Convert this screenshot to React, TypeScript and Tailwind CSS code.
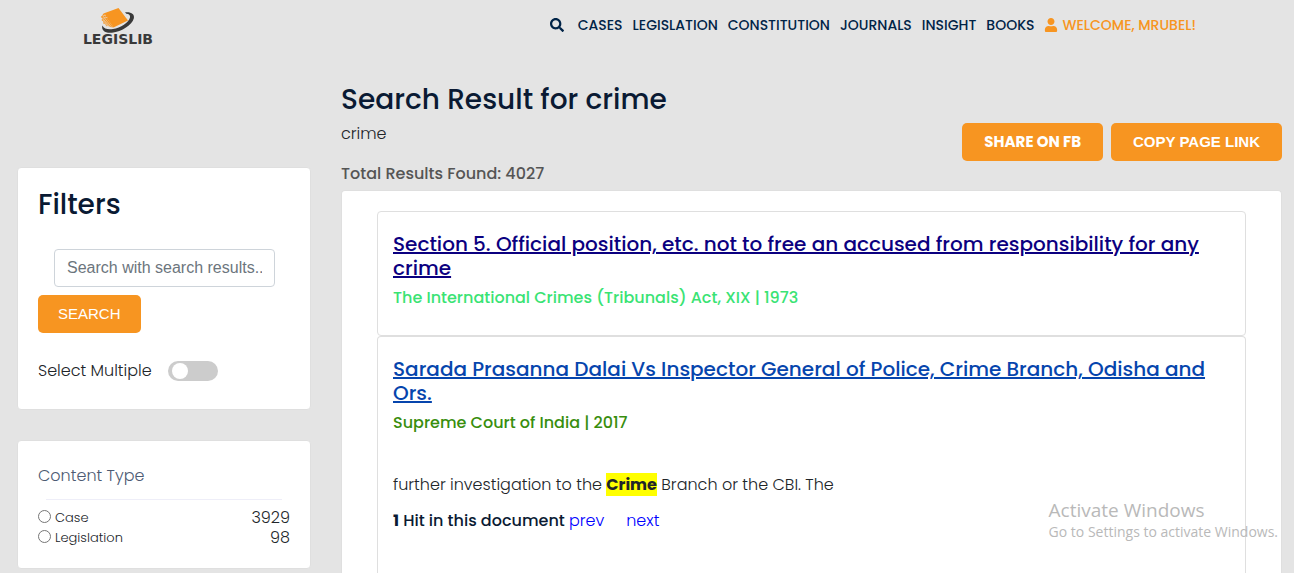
import { FaSearch, FaUser } from "react-icons/fa";

const navItems = ["CASES", "LEGISLATION", "CONSTITUTION", "JOURNALS", "INSIGHT", "BOOKS"];

const contentTypes = [
  { id: "case", label: "Case", count: 3929 },
  { id: "legislation", label: "Legislation", count: 98 },
];

const buttonClass = "h-[38px] rounded-[5px] bg-[#f79521] text-[15px] text-white";

function Logo() {
  return (
    <a href="#home" className="flex w-[84px] flex-col items-center">
      <svg viewBox="0 0 36 26" className="h-[26px] w-9" aria-hidden="true">
        <path
          fill="#393939"
          d="M25 4.300C31 3.600 35 6 33.800 10.500 32 17 22 23.500 12 24.700 5 25.400 1.300 22.500 2.300 17.500c1.700 3.500 5.700 4.300 10.700 3.600C20.500 20 29 14.500 30 9.600c.5-2.300-1-3.800-3.700-3.800Z"
        />
        <path fill="#f79521" d="M3.500 5.500 18.500 0 28 12.500l-14.500 7Z" />
        <path
          fill="#f79521"
          d="M3.500 5.500 13.500 19.500 10 19l-1-.2-1-.8-1.500.2L5 16l-1.800-.5.3-1.700L1.500 12l.9-1.500L.8 9l1.200-1.300Z"
        />
        <path
          stroke="#e4e4e4"
          strokeWidth=".5"
          fill="none"
          d="m2.500 7.500 9 11.500M2 9.500l8 9.500M2.500 11.500 9 19M4 14.500l4 4M3 7.700l3-.5M3.500 10l4-.7"
        />
      </svg>
      <span className="mt-px font-['DejaVu_Sans',sans-serif] text-[14px] leading-[9px] font-bold text-[#393939]">
        LEGISLIB
      </span>
    </a>
  );
}

function Header() {
  return (
    <header className="flex h-[67px] shrink-0 items-start justify-between pr-[98px] pl-[76px]">
      <div className="pt-2">
        <Logo />
      </div>
      <nav className="flex items-center gap-[10px] pt-[15px] text-[14px] leading-5 font-medium text-[#002347]">
        <button type="button" aria-label="Search" className="mr-1">
          <FaSearch className="size-[14px]" />
        </button>
        {navItems.map((item) => (
          <a key={item} href={`#${item.toLowerCase()}`}>
            {item}
          </a>
        ))}
        <a href="#account" className="flex items-center gap-1 text-[#f79521]">
          <FaUser className="size-[14px]" />
          WELCOME, MRUBEL!
        </a>
      </nav>
    </header>
  );
}

function Sidebar() {
  return (
    <aside className="flex w-[294px] shrink-0 flex-col gap-[30px] pt-[100px]">
      <section className="rounded-[4px] border border-[#dfdfdf] bg-white px-5 pt-5 pb-[26px]">
        <h2 className="text-[28px] leading-[34px] font-medium text-[#0a1a33]">Filters</h2>
        <form className="pt-[27px]" onSubmit={(e) => e.preventDefault()}>
          <div className="pr-[15px] pl-4">
            <input
              type="text"
              aria-label="Search with search results"
              placeholder="Search with search results.."
              className="block h-[38px] w-full rounded-[4px] border border-[#ced4da] bg-white px-3 font-['Liberation_Sans',sans-serif] text-[16px] placeholder:text-[#6c757d]"
            />
          </div>
          <button
            type="submit"
            className={`${buttonClass} mt-2 px-5 font-['Liberation_Sans',sans-serif]`}
          >
            SEARCH
          </button>
          <label className="mt-[26px] flex h-6 items-center gap-4 text-[16px] font-light text-[#212529]">
            Select Multiple
            <input
              type="checkbox"
              role="switch"
              className="h-5 w-[50px] appearance-none rounded-full bg-[#ccc] p-[2px] pl-1 before:block before:size-4 before:rounded-full before:bg-white checked:bg-[#f79521] checked:before:ml-7"
            />
          </label>
        </form>
      </section>

      <section className="rounded-[4px] border border-[#dfdfdf] bg-white px-5 pt-[23px] pb-5">
        <h3 className="text-[16px] leading-6 font-light text-[#4d5b73]">Content Type</h3>
        <hr className="mx-2 mt-[11px] mb-2 border-[#eeeef8]" />
        {contentTypes.map((type) => (
          <div key={type.id} className="flex h-5 items-center leading-5 font-light text-[#212529]">
            <input
              id={type.id}
              type="radio"
              name="content-type"
              className="mr-1 mb-[3px] size-[13px] appearance-none rounded-full border border-[#767676] bg-white checked:border-4"
            />
            <label htmlFor={type.id} className="grow text-[13px]">
              {type.label}
            </label>
            <span className="text-[16px]">{type.count}</span>
          </div>
        ))}
      </section>
    </aside>
  );
}

function Results() {
  return (
    <main className="flex min-w-0 grow flex-col pt-4">
      <h1 className="text-[28px] leading-[34px] font-medium text-[#0a1a33]">
        Search Result for crime
      </h1>
      <div className="flex justify-between">
        <div className="pt-[5px] text-[16px] leading-6">
          <p className="font-light text-[#212529]">crime</p>
          <p className="mt-4 font-medium text-[#555]">Total Results Found: 4027</p>
        </div>
        <div className="flex gap-2 pt-[6px] font-bold">
          <button type="button" className={`${buttonClass} px-[22px]`}>
            SHARE ON FB
          </button>
          <button
            type="button"
            className={`${buttonClass} px-[22px] font-['Liberation_Sans',sans-serif]`}
          >
            COPY PAGE LINK
          </button>
        </div>
      </div>

      <div className="mt-1 flex grow flex-col rounded-t-[4px] border border-b-0 border-[#dfdfdf] bg-white px-[35px] pt-5">
        <article className="rounded-[4px] border border-[#dfdfdf] px-[15px] pt-5 pb-[25px]">
          <h2 className="text-[20px] leading-6 font-medium text-[#0b0080]">
            <a href="#section-5" className="underline">
              Section 5. Official position, etc. not to free an accused from responsibility for any
              crime
            </a>
          </h2>
          <p className="mt-[6px] text-[16px] leading-6 font-medium text-[#3ae374]">
            The International Crimes (Tribunals) Act, XIX | 1973
          </p>
        </article>
        <article className="grow rounded-t-[4px] border border-b-0 border-[#dfdfdf] px-[15px] pt-5 pb-5">
          <h2 className="text-[20px] leading-6 font-medium text-[#0645ad]">
            <a href="#sarada-prasanna-dalai" className="underline">
              Sarada Prasanna Dalai Vs Inspector General of Police, Crime Branch, Odisha and Ors.
            </a>
          </h2>
          <p className="mt-[6px] text-[16px] leading-6 font-medium text-[#388e0e]">
            Supreme Court of India | 2017
          </p>
          <p className="mt-[38px] text-[16px] leading-6 font-light text-[#212529]">
            further investigation to the{" "}
            <mark className="bg-[#ff0] font-bold text-[#212529]">Crime</mark> Branch or the CBI. The
          </p>
          <p className="mt-3 text-[16px] leading-6 font-medium text-[#0a1a33]">
            <b>1</b> Hit in this document{" "}
            <a href="#prev" className="font-light text-[#00f]">
              prev
            </a>
            <a href="#next" className="ml-[22px] font-light text-[#00f]">
              next
            </a>
          </p>
        </article>
      </div>
    </main>
  );
}

export default function App() {
  return (
    <div className="relative flex min-h-screen flex-col bg-[#e4e4e4] font-['Poppins','Inter',sans-serif]">
      <Header />
      <div className="flex grow gap-[30px] pr-3 pl-[17px]">
        <Sidebar />
        <Results />
      </div>
      <div className="pointer-events-none absolute right-4 bottom-[31px] font-['Open_Sans',sans-serif] text-[#b9b9b9]">
        <p className="text-[19px] leading-6">Activate Windows</p>
        <p className="text-[14px] leading-5">Go to Settings to activate Windows.</p>
      </div>
    </div>
  );
}
